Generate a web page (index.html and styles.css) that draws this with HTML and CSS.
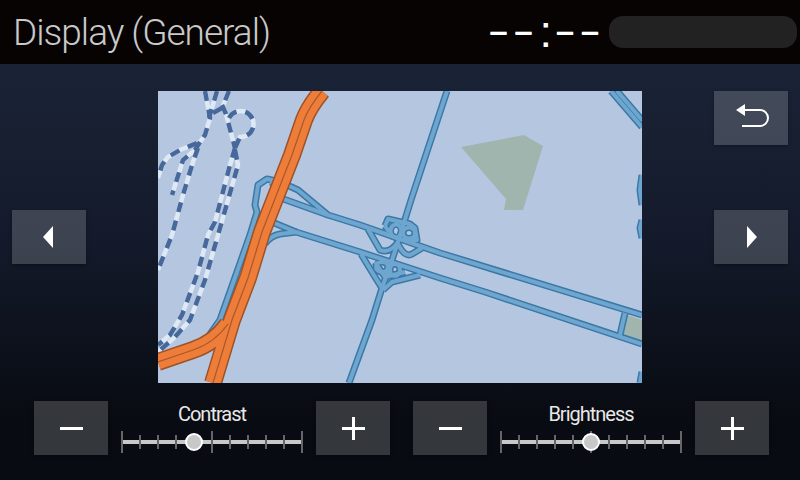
FILE: index.html
```html
<!DOCTYPE html>
<html lang="en">
<head>
    <meta charset="UTF-8">
    <meta name="viewport" content="width=device-width, initial-scale=1.0">
    <title>Display (General)</title>
    <link rel="stylesheet" href="styles.css">
</head>
<body>
    <header class="top-bar">
        <h1 class="title">Display (General)</h1>
        <div class="status">
            <div class="clock"><span>——</span><span class="colon">:</span><span>——</span></div>
            <div class="status-pill"></div>
        </div>
    </header>

    <main class="stage">
        <div class="side side-left">
            <button class="btn btn-page" aria-label="Previous">
                <svg width="74" height="54" viewBox="0 0 74 54"><polygon class="icon-fill" points="41,16 31,27 41,38"/></svg>
            </button>
        </div>

        <!-- Map preview, drawn in page coordinates -->
        <svg class="map" width="484" height="292" viewBox="158 91 484 292">
            <defs>
                <g id="blue-roads">
                    <path d="M447 91 L411 200 L398 242 L392 260 L382 288 L372 320 L349 383"/>
                    <path d="M611 91 L642 127"/>
                    <path d="M617 91 L642 120"/>
                    <path d="M270 182 L287 185 L298 190 L328 215 L360 225 L440 253 L642 315"/>
                    <path d="M275 196 L328 215"/>
                    <path d="M265 244 Q270 236 280 234 L296 232 L360 252 L440 278 L485 292 L642 344"/>
                    <path d="M272 222 L296 232"/>
                    <path d="M285 183 L267 179 L258 185 L255 205 L257 212 L250 235 L220 320 L208 337"/>
                    <path d="M368 229 L380 250 Q390 254 398 242"/>
                    <path d="M385 226 L388 219 L410 224 L415 228 L417 240 L410 240"/>
                    <path d="M385 226 L389 232"/>
                    <path d="M422 248 L412 254 Q405 258 398 244"/>
                    <path d="M361 254 L375 277 L382 288"/>
                    <path d="M383 290 L392 282 L420 275"/>
                    <path d="M375 262 L385 277 L405 272"/>
                    <path d="M625 313 L620 335"/>
                    <path d="M642 175 L640 190 L642 205"/>
                    <path d="M642 220 L640 228 L642 238"/>
                    <path d="M642 372 L640 383"/>
                    <ellipse cx="396" cy="231" rx="5.5" ry="6.5"/>
                    <ellipse cx="409" cy="233" rx="6" ry="5.5"/>
                    <ellipse cx="382" cy="267" rx="6" ry="5"/>
                    <ellipse cx="395" cy="270" rx="5" ry="6"/>
                </g>
                <g id="rail">
                    <path d="M205 91 L210 118 L205 135 L200 142 L180 150 L168 157 L162 165 L158 178"/>
                    <path d="M217 91 L209 118"/>
                    <path d="M229 91 L222 108 L213 113"/>
                    <path d="M222 105 L226 114 L235 148"/>
                    <path d="M200 142 L195 150 L183 160 L172 195"/>
                    <path d="M198 148 L193 162 L183 195 L172 235 L158 270"/>
                    <path d="M229 118 A13 13 0 1 1 240 137 L235 148"/>
                    <path d="M235 148 L230 165 L215 222 L208 235 L198 272 L182 315 L170 335 L158 345"/>
                    <path d="M235 150 L238 165 L218 235 L205 280 L190 320 L174 338 L158 352"/>
                </g>
                <g id="motorway">
                    <path d="M322 91 C313 102 307 112 304 120 L292 155 L262 232 L248 278 L232 320 L213 383"/>
                    <path d="M158 362 L193 350 C205 346 218 338 228 324"/>
                </g>
            </defs>

            <rect x="158" y="91" width="484" height="292" fill="#b5c7e0"/>
            <polygon class="land" points="461,147 524,135 543,146 523,210 504,210 506,199"/>
            <polygon class="land" points="627,315 642,320 642,342 622,335"/>

            <use href="#blue-roads" class="road-edge"/>
            <use href="#blue-roads" class="road-fill"/>
            <use href="#rail" class="rail-base"/>
            <use href="#rail" class="rail-dash"/>
            <use href="#motorway" class="motorway-edge"/>
            <use href="#motorway" class="motorway-fill"/>
            <use href="#motorway" class="motorway-line"/>
        </svg>

        <div class="side side-right">
            <button class="btn btn-back" aria-label="Back">
                <svg width="74" height="54" viewBox="0 0 74 54">
                    <polygon class="icon-fill" points="22,19 31,13 31,25"/>
                    <path class="icon-stroke" d="M30 19 H46 A8 8 0 0 1 46 35 H28"/>
                </svg>
            </button>
            <button class="btn btn-page" aria-label="Next">
                <svg width="74" height="54" viewBox="0 0 74 54"><polygon class="icon-fill" points="33,16 43,27 33,38"/></svg>
            </button>
        </div>
    </main>

    <section class="controls">
        <div class="adjust">
            <button class="btn btn-step" aria-label="Less contrast"><span class="minus"></span></button>
            <div class="slider-box">
                <div class="slider-label">Contrast</div>
                <div class="slider">
                    <span class="tick tick-big"></span><span class="tick"></span><span class="tick"></span><span class="tick"></span><span class="tick"></span><span class="tick tick-big"></span><span class="tick"></span><span class="tick"></span><span class="tick"></span><span class="tick"></span><span class="tick tick-big"></span>
                    <span class="thumb" style="left: 40%"></span>
                </div>
            </div>
            <button class="btn btn-step" aria-label="More contrast"><span class="minus"></span><span class="plus-bar"></span></button>
        </div>
        <div class="adjust">
            <button class="btn btn-step" aria-label="Less brightness"><span class="minus"></span></button>
            <div class="slider-box">
                <div class="slider-label">Brightness</div>
                <div class="slider">
                    <span class="tick tick-big"></span><span class="tick"></span><span class="tick"></span><span class="tick"></span><span class="tick"></span><span class="tick tick-big"></span><span class="tick"></span><span class="tick"></span><span class="tick"></span><span class="tick"></span><span class="tick tick-big"></span>
                    <span class="thumb" style="left: 50%"></span>
                </div>
            </div>
            <button class="btn btn-step" aria-label="More brightness"><span class="minus"></span><span class="plus-bar"></span></button>
        </div>
    </section>
</body>
</html>
```
FILE: styles.css
```css
* {
    box-sizing: border-box;
}
body {
    margin: 0;
    width: 800px;
    height: 480px;
    overflow: hidden;
    font-family: Roboto, "Liberation Sans", sans-serif;
    background: linear-gradient(#1a2336 64px, #141a2b 240px, #080b11 420px);
    color: #ffffff;
}
.top-bar {
    height: 64px;
    background-color: #070303;
    display: flex;
    align-items: center;
    justify-content: space-between;
    padding: 0 3px 0 13px;
}
.title {
    margin: 0;
    font-size: 37px;
    font-weight: 300;
    letter-spacing: -1px;
    color: #c9c9c9;
}
.status {
    display: flex;
    align-items: center;
    gap: 3px;
}
.clock {
    display: flex;
    align-items: center;
    font-family: "DejaVu Sans", sans-serif;
    font-weight: bold;
    font-size: 18px;
    letter-spacing: 7px;
    line-height: 32px;
    text-shadow: 0 1px 0 #ffffff;
}
.colon {
    font-family: "Liberation Sans", sans-serif;
    font-weight: normal;
    font-size: 45px;
    letter-spacing: 0;
    margin-right: 4px;
    text-shadow: none;
}
.status-pill {
    width: 188px;
    height: 32px;
    border-radius: 14px;
    background-color: #222222;
}
.stage {
    display: flex;
    padding: 27px 12px 0;
    justify-content: space-between;
}
.side {
    width: 74px;
    display: flex;
    flex-direction: column;
}
.side-left {
    justify-content: center;
}
.side-right {
    gap: 65px;
}
.map {
    display: block;
}
.btn {
    width: 74px;
    height: 54px;
    padding: 0;
    border: none;
    display: flex;
    align-items: center;
    justify-content: center;
    position: relative;
    background-color: rgba(255, 255, 255, 0.18);
    box-shadow: 0 1px 3px rgba(0, 0, 0, 0.35);
}
.btn svg {
    display: block;
}
.icon-fill {
    fill: #ffffff;
}
.icon-stroke {
    fill: none;
    stroke: #ffffff;
    stroke-width: 2;
}
.land {
    fill: #9fb5ad;
}
.road-edge {
    fill: none;
    stroke: #3a78a6;
    stroke-width: 7;
    stroke-linejoin: round;
}
.road-fill {
    fill: none;
    stroke: #6ea6cf;
    stroke-width: 4;
    stroke-linejoin: round;
}
.rail-base {
    fill: none;
    stroke: #dfe8f5;
    stroke-width: 4.5;
}
.rail-dash {
    fill: none;
    stroke: #46689a;
    stroke-width: 4.5;
    stroke-dasharray: 10 9;
}
.motorway-edge {
    fill: none;
    stroke: #9c5128;
    stroke-width: 18;
    stroke-linejoin: round;
}
.motorway-fill {
    fill: none;
    stroke: #ef7d3a;
    stroke-width: 15;
    stroke-linejoin: round;
}
.motorway-line {
    fill: none;
    stroke: #a9582a;
    stroke-width: 1.2;
}
.controls {
    display: flex;
    gap: 23px;
    padding: 18px 0 0 34px;
}
.adjust {
    display: flex;
    gap: 14px;
}
.minus {
    display: block;
    width: 23px;
    height: 3px;
    background-color: #ffffff;
}
.plus-bar {
    position: absolute;
    left: 50%;
    top: 50%;
    width: 3px;
    height: 23px;
    margin: -11.5px 0 0 -1.5px;
    background-color: #ffffff;
}
.slider-box {
    width: 180px;
}
.slider-label {
    text-align: center;
    font-size: 20px;
    letter-spacing: -1px;
    line-height: 26px;
    color: #e8e8e8;
}
.slider {
    position: relative;
    height: 22px;
    margin: 4px -1px 0;
    display: flex;
    align-items: center;
    justify-content: space-between;
    background: linear-gradient(#c8c8c8, #c8c8c8) center / 100% 4px no-repeat;
}
.tick {
    width: 2px;
    height: 14px;
    background-color: #666666;
}
.tick-big {
    height: 22px;
}
.thumb {
    position: absolute;
    top: 50%;
    width: 18px;
    height: 18px;
    margin: -9px 0 0 -9px;
    border-radius: 50%;
    background-color: #c8c8c8;
    border: 2px solid #ffffff;
}
```
